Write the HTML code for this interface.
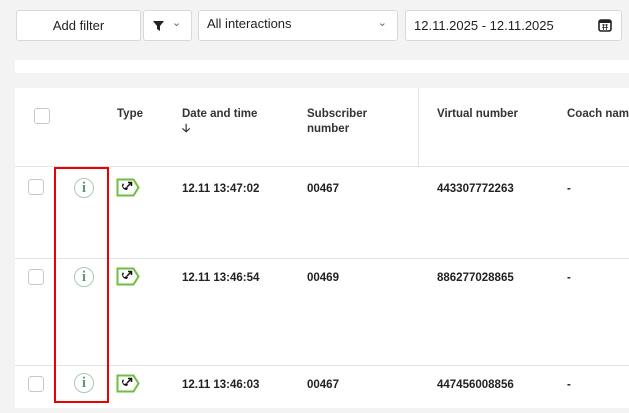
<!DOCTYPE html><html><head><style>
body{margin:0;width:629px;height:413px;background:#f3f3f3;font-family:"Liberation Sans",sans-serif;position:relative;overflow:hidden;color:#222}
.a{position:absolute}
.box{position:absolute;background:#fff;border:1px solid #d8d8d8;border-radius:3px;box-sizing:border-box;font-size:13px}
.h{position:absolute;font-size:11.5px;font-weight:bold;color:#333;line-height:15px}
.c{position:absolute;font-size:11.5px;font-weight:bold;color:#222}
.cb{position:absolute;width:14px;height:14px;border:1px solid #c8c8c8;border-radius:3px;background:#fff}
.info{position:absolute;width:20px;height:20px;border:1.5px solid #a9c9b5;border-radius:50%;color:#5f9a76;font-family:"Liberation Serif",serif;font-weight:bold;font-size:15px;text-align:center;line-height:19px;box-sizing:border-box}
.line{position:absolute;left:15px;right:0;height:1px;background:#e3e3e3}
</style></head><body>
<div class="box" style="left:16px;top:10px;width:125px;height:31px;text-align:center;line-height:29px">Add filter</div>
<div class="box" style="left:143px;top:10px;width:49px;height:31px"><svg class="a" style="left:9px;top:9px" width="12" height="12"><path d="M0 1h11L7 6v5L4 9V6z" fill="#222"/></svg><span class="a" style="left:28px;top:5px;font-size:11px;color:#666">&#8964;</span></div>
<div class="box" style="left:198px;top:10px;width:200px;height:31px;padding:5px 8px;line-height:16px">All interactions<span class="a" style="right:10px;top:4px;font-size:11px;color:#666">&#8964;</span></div>
<div class="box" style="left:405px;top:10px;width:217px;height:31px;padding:7px 8px;line-height:16px">12.11.2025 - 12.11.2025<svg class="a" style="left:192px;top:7px" width="14" height="14"><rect x="1" y="2" width="12" height="11" rx="2" fill="none" stroke="#222" stroke-width="1.6"/><rect x="1" y="2" width="12" height="3" fill="#222"/><path d="M4 7h6M4 9.5h6M5.5 6v6M8.5 6v6" stroke="#222" stroke-width="0.8"/></svg></div>
<div class="a" style="left:15px;top:60px;width:614px;height:13px;background:#fff"></div>
<div class="a" style="left:15px;top:88px;width:614px;height:320px;background:#fff"></div>
<div class="a" style="left:418px;top:88px;width:1px;height:78px;background:#e3e3e3"></div>
<div class="line" style="top:166px"></div><div class="line" style="top:258px"></div><div class="line" style="top:365px"></div>
<div class="cb" style="left:34px;top:108px"></div>
<div class="h" style="left:117px;top:107px">Type</div>
<div class="h" style="left:182px;top:107px">Date and time<br>&#129123;</div>
<div class="h" style="left:307px;top:107px">Subscriber<br>number</div>
<div class="h" style="left:437px;top:107px">Virtual number</div>
<div class="h" style="left:567px;top:107px;white-space:nowrap">Coach name</div>
<div class="cb" style="left:28px;top:179px"></div><div class="info" style="left:74px;top:178px">i</div>
<div class="cb" style="left:28px;top:269px"></div><div class="info" style="left:74px;top:267px">i</div>
<div class="cb" style="left:28px;top:376px"></div><div class="info" style="left:74px;top:373px">i</div>
<svg class="a" style="left:116px;top:178px" width="25" height="20"><path d="M1.5 1.5h16l5 8-5 8h-16z" fill="#fff" stroke="#6cbf3f" stroke-width="2"/><path d="M6 7c0 3 2 5 5 5l1-2-2-1-1 1c-1 0-2-1-2-2l1-1-1-2z" fill="#111"/><path d="M11 9l4-4M12 4.5h3.5V8" stroke="#111" stroke-width="1.5" fill="none"/></svg>
<svg class="a" style="left:116px;top:267px" width="25" height="20"><path d="M1.5 1.5h16l5 8-5 8h-16z" fill="#fff" stroke="#6cbf3f" stroke-width="2"/><path d="M6 7c0 3 2 5 5 5l1-2-2-1-1 1c-1 0-2-1-2-2l1-1-1-2z" fill="#111"/><path d="M11 9l4-4M12 4.5h3.5V8" stroke="#111" stroke-width="1.5" fill="none"/></svg>
<svg class="a" style="left:116px;top:374px" width="25" height="20"><path d="M1.5 1.5h16l5 8-5 8h-16z" fill="#fff" stroke="#6cbf3f" stroke-width="2"/><path d="M6 7c0 3 2 5 5 5l1-2-2-1-1 1c-1 0-2-1-2-2l1-1-1-2z" fill="#111"/><path d="M11 9l4-4M12 4.5h3.5V8" stroke="#111" stroke-width="1.5" fill="none"/></svg>
<div class="c" style="left:182px;top:183px">12.11 13:47:02</div><div class="c" style="left:307px;top:183px">00467</div><div class="c" style="left:437px;top:183px">443307772263</div><div class="c" style="left:567px;top:183px">-</div>
<div class="c" style="left:182px;top:272px">12.11 13:46:54</div><div class="c" style="left:307px;top:272px">00469</div><div class="c" style="left:437px;top:272px">886277028865</div><div class="c" style="left:567px;top:272px">-</div>
<div class="c" style="left:182px;top:379px">12.11 13:46:03</div><div class="c" style="left:307px;top:379px">00467</div><div class="c" style="left:437px;top:379px">447456008856</div><div class="c" style="left:567px;top:379px">-</div>
<div class="a" style="left:54px;top:167px;width:51px;height:232px;border:2px solid #e00;"></div>
</body></html>
